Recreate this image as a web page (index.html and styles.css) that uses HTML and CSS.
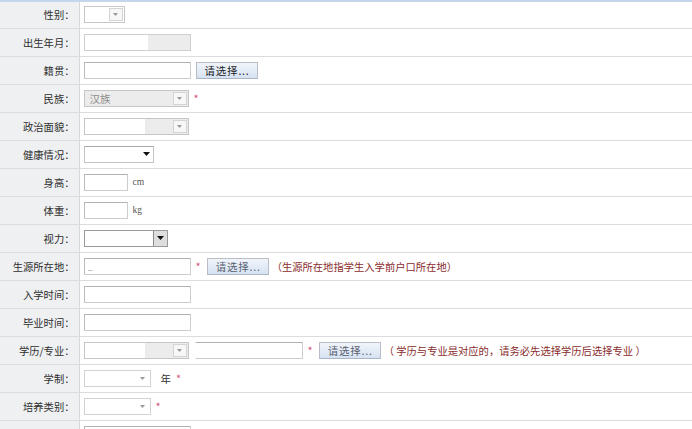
FILE: index.html
```html
<!DOCTYPE html>
<html lang="zh-CN">
<head>
    <meta charset="UTF-8">
    <title>学生信息</title>
    <link rel="stylesheet" href="styles.css">
</head>
<body>
    <div class="form-wrap">
        <table class="info-table">
            <tr>
                <td class="lbl">性别：</td>
                <td class="val"><div class="line">
                    <span class="combo combo-xs masked-all"><span class="combo-text"></span><span class="combo-btn"><svg width="5" height="3" viewBox="0 0 5 3"><path d="M0 0h5L2.5 3z" fill="#999"/></svg></span></span>
                </div></td>
            </tr>
            <tr>
                <td class="lbl">出生年月：</td>
                <td class="val"><div class="line">
                    <input class="txt off" type="text">
                </div></td>
            </tr>
            <tr>
                <td class="lbl">籍贯：</td>
                <td class="val"><div class="line">
                    <input class="txt" type="text">
                    <button class="pick dark" type="button">请选择...</button>
                </div></td>
            </tr>
            <tr>
                <td class="lbl">民族：</td>
                <td class="val"><div class="line">
                    <span class="combo"><span class="combo-text">汉族</span><span class="combo-btn"><svg width="5" height="3" viewBox="0 0 5 3"><path d="M0 0h5L2.5 3z" fill="#999"/></svg></span></span>
                    <span class="req">*</span>
                </div></td>
            </tr>
            <tr>
                <td class="lbl">政治面貌：</td>
                <td class="val"><div class="line">
                    <span class="combo masked"><span class="combo-text"></span><span class="combo-btn"><svg width="5" height="3" viewBox="0 0 5 3"><path d="M0 0h5L2.5 3z" fill="#999"/></svg></span></span>
                </div></td>
            </tr>
            <tr>
                <td class="lbl">健康情况：</td>
                <td class="val"><div class="line">
                    <span class="sel sel-health"><svg width="7" height="4" viewBox="0 0 7 4"><path d="M0 0h7L3.5 4z" fill="#111"/></svg></span>
                </div></td>
            </tr>
            <tr>
                <td class="lbl">身高：</td>
                <td class="val"><div class="line">
                    <input class="txt short" type="text">
                    <span class="unit">cm</span>
                </div></td>
            </tr>
            <tr>
                <td class="lbl">体重：</td>
                <td class="val"><div class="line">
                    <input class="txt short" type="text">
                    <span class="unit">kg</span>
                </div></td>
            </tr>
            <tr>
                <td class="lbl">视力：</td>
                <td class="val"><div class="line">
                    <span class="sel sel-eye"><span class="sel-btn"><svg width="7" height="4" viewBox="0 0 7 4"><path d="M0 0h7L3.5 4z" fill="#111"/></svg></span></span>
                </div></td>
            </tr>
            <tr>
                <td class="lbl">生源所在地：</td>
                <td class="val"><div class="line">
                    <input class="txt" type="text" value="_">
                    <span class="req">*</span>
                    <button class="pick" type="button">请选择...</button>
                    <span class="tip">（生源所在地指学生入学前户口所在地）</span>
                </div></td>
            </tr>
            <tr>
                <td class="lbl">入学时间：</td>
                <td class="val"><div class="line">
                    <input class="txt" type="text">
                </div></td>
            </tr>
            <tr>
                <td class="lbl">毕业时间：</td>
                <td class="val"><div class="line">
                    <input class="txt" type="text">
                </div></td>
            </tr>
            <tr>
                <td class="lbl">学历/专业：</td>
                <td class="val"><div class="line">
                    <span class="combo masked"><span class="combo-text"></span><span class="combo-btn"><svg width="5" height="3" viewBox="0 0 5 3"><path d="M0 0h5L2.5 3z" fill="#999"/></svg></span></span>
                    <input class="txt major" type="text">
                    <span class="req">*</span>
                    <button class="pick" type="button">请选择...</button>
                    <span class="tip">（ 学历与专业是对应的，请务必先选择学历后选择专业 ）</span>
                </div></td>
            </tr>
            <tr>
                <td class="lbl">学制：</td>
                <td class="val"><div class="line">
                    <span class="sel sel-sm"><svg width="5" height="3" viewBox="0 0 5 3"><path d="M0 0h5L2.5 3z" fill="#999"/></svg></span>
                    <span class="year">年</span>
                    <span class="req">*</span>
                </div></td>
            </tr>
            <tr>
                <td class="lbl">培养类别：</td>
                <td class="val"><div class="line">
                    <span class="sel sel-sm"><svg width="5" height="3" viewBox="0 0 5 3"><path d="M0 0h5L2.5 3z" fill="#999"/></svg></span>
                    <span class="req">*</span>
                </div></td>
            </tr>
            <tr>
                <td class="lbl"></td>
                <td class="val"><div class="line">
                    <input class="txt" type="text">
                </div></td>
            </tr>
        </table>
    </div>
</body>
</html>
```

FILE: styles.css
```css
* {
    margin: 0;
    padding: 0;
    box-sizing: border-box;
}

body {
    font-family: "Noto Sans CJK SC", "Liberation Sans", sans-serif;
    font-size: 10.3px;
    color: #333;
    background: #fff;
    overflow: hidden;
}

/* Form table */
.form-wrap {
    border-top: 2px solid #c3d6ec;
}

.info-table {
    width: 100%;
    border-collapse: collapse;
}

.info-table td {
    height: 28px;
    border-bottom: 1px solid #dadcde;
    padding: 0;
}

.info-table tr:first-child td {
    height: 26px;
}

.lbl {
    width: 79px;
    background: #eef0f2;
    border-right: 1px solid #d6d9dc;
    text-align: right;
    padding-right: 4px !important;
    white-space: nowrap;
    color: #2e2e2e;
}

.val {
    padding-left: 4px !important;
}

.line {
    display: flex;
    align-items: center;
    white-space: nowrap;
}

/* Text boxes */
.txt {
    width: 107px;
    height: 17px;
    border: 1px solid #cdcdcd;
    border-top-color: #b2b2b2;
    border-left-color: #bcbcbc;
    background: #fff;
    font: inherit;
    font-size: 9px;
    color: #999;
    padding: 0 3px;
    outline: none;
}

.txt.off {
    background: linear-gradient(90deg, #fff 0, #fff 60%, #ececec 60%);
    border-color: #cfcfcf;
}

.txt.short {
    width: 44px;
}

.txt.major {
    width: 108px;
    margin-left: 6px;
    border-left-color: #fff;
    background: linear-gradient(90deg, #fff 0, #fff 24%, #fff 24%);
}

/* Disabled combo boxes */
.combo {
    display: inline-flex;
    width: 105px;
    height: 17px;
    border: 1px solid #c6c6c6;
    background: #ececec;
}

.combo-xs {
    width: 41px;
}

.combo.masked {
    background: linear-gradient(90deg, #fff 0, #fff 58%, #ececec 58%);
}

.combo.masked-all {
    background: #fff;
}

.combo-text {
    flex: 1;
    padding-left: 5px;
    line-height: 15px;
    color: #8c8c8c;
    font-size: 10.5px;
}

.combo-btn {
    width: 14px;
    margin: 1px;
    border: 1px solid #d4d4d4;
    background: #f7f7f7;
    display: flex;
    align-items: center;
    justify-content: center;
}

/* Normal select boxes */
.sel {
    display: inline-flex;
    align-items: center;
    justify-content: flex-end;
    height: 17px;
    border: 1px solid #c4c4c4;
    border-top-color: #a9a9a9;
    background: #fff;
}

.sel-health {
    width: 70px;
    padding-right: 3px;
}

.sel-eye {
    width: 84px;
    border-color: #9a9a9a;
}

.sel-btn {
    width: 14px;
    height: 15px;
    background: #dedede;
    border-left: 1px solid #8d8d8d;
    display: flex;
    align-items: center;
    justify-content: center;
}

.sel-sm {
    width: 67px;
    padding-right: 5px;
    border-color: #d2d2d2;
}

/* Buttons */
.pick {
    width: 62px;
    height: 17px;
    margin-left: 5px;
    border: 1px solid #b9bec6;
    border-bottom-color: #a9b6c8;
    background: linear-gradient(#f1f5fb, #d6e2f2);
    font: inherit;
    font-size: 10.5px;
    color: #5a6270;
    text-align: left;
    padding-left: 8px;
    letter-spacing: 0.8px;
}

.pick.dark {
    color: #222;
}

.req {
    color: #d2587a;
    font-size: 11px;
    margin-left: 5px;
    margin-right: 1px;
}

.unit {
    font-family: "Liberation Serif", serif;
    font-size: 9.5px;
    color: #555;
    margin-left: 5px;
}

.year {
    margin-left: 10px;
    color: #333;
    font-size: 10.5px;
}

.tip {
    color: #8a2c2c;
    margin-left: 3px;
}
```
